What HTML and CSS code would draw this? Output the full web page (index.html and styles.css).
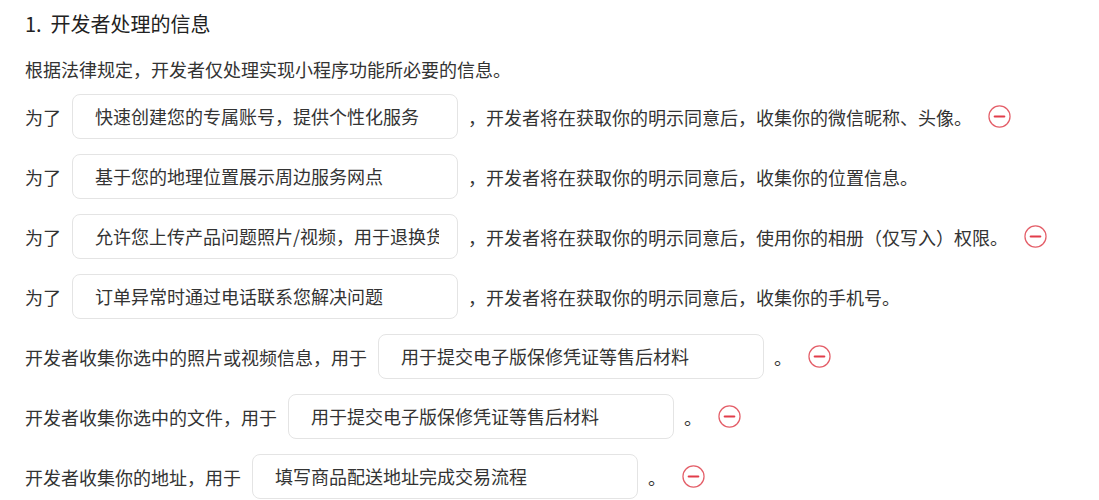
FILE: index.html
```html
<!DOCTYPE html>
<html>
<head>
<meta charset="utf-8">
<title>开发者处理的信息</title>
<link rel="stylesheet" href="styles.css">
</head>

<body>
<div id="wrapper">
	<div class="title">1.&nbsp;&nbsp;开发者处理的信息</div>
	<div class="intro">根据法律规定，开发者仅处理实现小程序功能所必要的信息。</div>

	<div class="row">
		<span>为了</span>
		<div class="field"><span>快速创建您的专属账号，提供个性化服务</span></div>
		<span>，开发者将在获取你的明示同意后，收集你的微信昵称、头像。</span>
		<svg class="remove" viewBox="0 0 24 24"><circle cx="12" cy="12" r="11" /><line x1="7" y1="12" x2="17" y2="12" /></svg>
	</div>
	<div class="row">
		<span>为了</span>
		<div class="field"><span>基于您的地理位置展示周边服务网点</span></div>
		<span>，开发者将在获取你的明示同意后，收集你的位置信息。</span>
	</div>
	<div class="row">
		<span>为了</span>
		<div class="field"><span>允许您上传产品问题照片/视频，用于退换货</span></div>
		<span>，开发者将在获取你的明示同意后，使用你的相册（仅写入）权限。</span>
		<svg class="remove" viewBox="0 0 24 24"><circle cx="12" cy="12" r="11" /><line x1="7" y1="12" x2="17" y2="12" /></svg>
	</div>
	<div class="row">
		<span>为了</span>
		<div class="field"><span>订单异常时通过电话联系您解决问题</span></div>
		<span>，开发者将在获取你的明示同意后，收集你的手机号。</span>
	</div>
	<div class="row">
		<span>开发者收集你选中的照片或视频信息，用于</span>
		<div class="field"><span>用于提交电子版保修凭证等售后材料</span></div>
		<span>。</span>
		<svg class="remove" viewBox="0 0 24 24"><circle cx="12" cy="12" r="11" /><line x1="7" y1="12" x2="17" y2="12" /></svg>
	</div>
	<div class="row">
		<span>开发者收集你选中的文件，用于</span>
		<div class="field"><span>用于提交电子版保修凭证等售后材料</span></div>
		<span>。</span>
		<svg class="remove" viewBox="0 0 24 24"><circle cx="12" cy="12" r="11" /><line x1="7" y1="12" x2="17" y2="12" /></svg>
	</div>
	<div class="row">
		<span>开发者收集你的地址，用于</span>
		<div class="field"><span>填写商品配送地址完成交易流程</span></div>
		<span>。</span>
		<svg class="remove" viewBox="0 0 24 24"><circle cx="12" cy="12" r="11" /><line x1="7" y1="12" x2="17" y2="12" /></svg>
	</div>
</div>
</body>
</html>
```

FILE: styles.css
```css
html, body {
	margin: 0px;
	padding: 0px;
	background: #fff;
}
#wrapper {
	font-family: "Noto Sans CJK SC", "Noto Sans", sans-serif;
	color: #333;
	font-size: 18px;
	padding: 10px 25px 8px;
}
.title {
	font-size: 20px;
	line-height: 28px;
	color: #222;
}
.intro {
	line-height: 26px;
	margin-top: 18px;
	margin-bottom: 12px;
}
.row {
	display: flex;
	align-items: center;
	height: 45px;
	margin-bottom: 15px;
	white-space: nowrap;
}
.field {
	box-sizing: border-box;
	width: 386px;
	height: 45px;
	line-height: 43px;
	margin: 0px 10px 0px 11px;
	padding: 0px 18px 0px 22px;
	border: 1px solid #e4e4e4;
	border-radius: 8px;
	color: #333;
}
.field span {
	display: block;
	overflow: hidden;
}
.remove {
	width: 23px;
	height: 23px;
	margin-left: 16px;
	flex-shrink: 0;
	cursor: pointer;
}
.remove circle {
	fill: none;
	stroke: #e4606a;
	stroke-width: 1.3;
}
.remove line {
	stroke: #e23d4a;
	stroke-width: 2.2;
	stroke-linecap: round;
}
```
